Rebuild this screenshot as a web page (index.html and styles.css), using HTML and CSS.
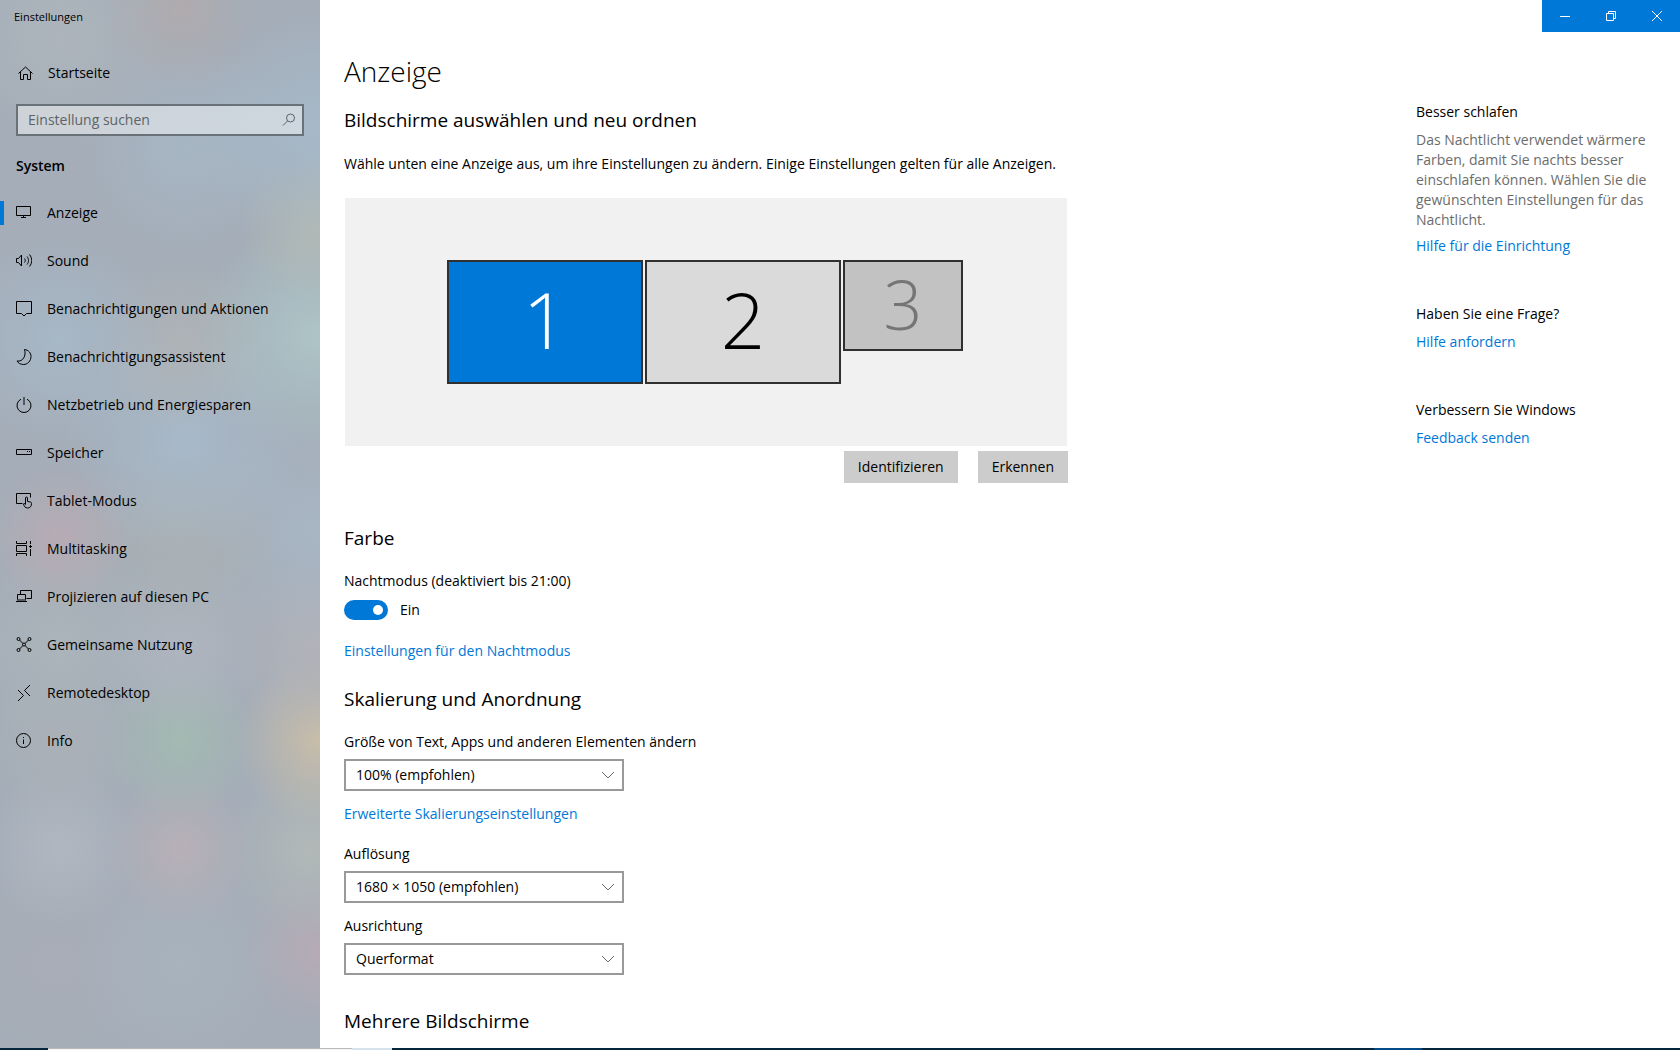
FILE: index.html
```html
<!DOCTYPE html>
<html lang="de">
<head>
    <meta charset="UTF-8">
    <meta name="viewport" content="width=device-width, initial-scale=1.0">
    <title>Einstellungen</title>
    <link rel="stylesheet" href="styles.css">
</head>
<body>
    <div class="window">
        <!-- Sidebar -->
        <aside class="sidebar">
            <div class="window-title">Einstellungen</div>
            <a class="nav-link home-link" href="#start">
                <svg class="icon" viewBox="0 0 16 16"><path d="M1.500 8.500 8.500 2l7 6.500M3.500 7v7.500h3V9.500h4v5h3V7"/></svg>
                Startseite
            </a>
            <div class="search">
                <input type="text" placeholder="Einstellung suchen" aria-label="Einstellung suchen">
                <svg class="icon" viewBox="0 0 16 16"><circle cx="10.500" cy="6" r="4"/><path d="M7.500 9 3 13.500"/></svg>
            </div>
            <h2 class="nav-title">System</h2>
            <nav>
                <a class="nav-link active" href="#anzeige">
                    <svg class="icon" viewBox="0 0 16 16"><path d="M.5 1.500h14v9H.5zM7.500 10.500v2M5 12.500h5"/></svg>
                    Anzeige
                </a>
                <a class="nav-link" href="#sound">
                    <svg class="icon" viewBox="0 0 16 16"><path d="M.5 5.500h2l3-3.500v11l-3-3.500h-2zM8.500 5.500c1 1 1 3 0 4M11 3.500c2 2.500 2 5.500 0 8M13.500 1.500c3 4 3 8 0 12"/></svg>
                    Sound
                </a>
                <a class="nav-link" href="#benachrichtigungen">
                    <svg class="icon" viewBox="0 0 16 16"><path d="M.5.5h15v12h-5L8 15l-2.500-2.500h-5z"/></svg>
                    Benachrichtigungen und Aktionen
                </a>
                <a class="nav-link" href="#assistent">
                    <svg class="icon" viewBox="0 0 16 16"><path d="M8.500.5c4 .5 6.500 3.500 6.500 7 0 4.500-3.500 8-7.500 8-3 0-5.500-1.500-6.500-3.500 6 1 9.500-5.500 7.500-11.500z"/></svg>
                    Benachrichtigungsassistent
                </a>
                <a class="nav-link" href="#energie">
                    <svg class="icon" viewBox="0 0 16 16"><path d="M8 0v8M5 2.200a7 7 0 1 0 6 0"/></svg>
                    Netzbetrieb und Energiesparen
                </a>
                <a class="nav-link" href="#speicher">
                    <svg class="icon" viewBox="0 0 16 16"><path d="M.5 4.500h15v5H.5zM11 6.500h1M13 6.500h1"/></svg>
                    Speicher
                </a>
                <a class="nav-link" href="#tablet">
                    <svg class="icon" viewBox="0 0 16 16"><path d="M6.500 10.500h-6v-10h14v4M9.500 11.500V5c0-1.300 2-1.300 2 0v3.500l3 .5c1 .3 1 1 1 1.500 0 3-1.500 4.500-4 4.500-2 0-3.500-1.500-4-4 .3-1 1.500-.5 2 .5"/></svg>
                    Tablet-Modus
                </a>
                <a class="nav-link" href="#multitasking">
                    <svg class="icon" viewBox="0 0 16 16"><path d="M.5 0v2.500h10V0M.5 15v-2.500h10V15M.5 4.500h10v6H.5zM14.500 0v3M14.500 8v7M13 5.500h3M14.500 4v3"/></svg>
                    Multitasking
                </a>
                <a class="nav-link" href="#projizieren">
                    <svg class="icon" viewBox="0 0 16 16"><path d="M4.500 5.500v-4h11v8h-5M1.500 10.500v-5h8v5M0 12.500h11M1 11h9"/></svg>
                    Projizieren auf diesen PC
                </a>
                <a class="nav-link" href="#nutzung">
                    <svg class="icon" viewBox="0 0 16 16"><circle cx="2.500" cy="2" r="1.500"/><circle cx="13.500" cy="2" r="1.500"/><circle cx="2.500" cy="13" r="1.500"/><circle cx="13.500" cy="13" r="1.500"/><circle cx="8" cy="7.500" r="1.500"/><path d="m3.500 3 3.500 3.500M12.500 3 9 6.500M3.500 12 7 8.500M12.500 12 9 8.500"/></svg>
                    Gemeinsame Nutzung
                </a>
                <a class="nav-link" href="#remote">
                    <svg class="icon" viewBox="0 0 16 16"><path d="m2 5 5.500 5.500L2 16M14 0 8.500 5.500 14 11"/></svg>
                    Remotedesktop
                </a>
                <a class="nav-link" href="#info">
                    <svg class="icon" viewBox="0 0 16 16"><circle cx="7.500" cy="7.500" r="7"/><path d="M7.500 6.500V11M7.500 4v1"/></svg>
                    Info
                </a>
            </nav>
        </aside>

        <div class="content">
            <!-- Window Buttons -->
            <header class="titlebar">
                <button aria-label="Minimieren"><svg viewBox="0 0 10 10"><path d="M0 5.500h10"/></svg></button>
                <button aria-label="Verkleinern"><svg viewBox="0 0 10 10"><path d="M.5 2.500h7v7h-7zM2.500 2.500v-2h7v7h-2"/></svg></button>
                <button aria-label="Schließen"><svg viewBox="0 0 10 10"><path d="m0 0 10 10M10 0 0 10"/></svg></button>
            </header>

            <div class="page">
                <main class="settings">
                    <h1>Anzeige</h1>

                    <section class="arrange">
                        <h2>Bildschirme auswählen und neu ordnen</h2>
                        <p>Wähle unten eine Anzeige aus, um ihre Einstellungen zu ändern. Einige Einstellungen gelten für alle Anzeigen.</p>
                        <div class="stage">
                            <button class="screen selected">1</button>
                            <button class="screen">2</button>
                            <button class="screen small">3</button>
                        </div>
                        <div class="actions">
                            <button>Identifizieren</button>
                            <button>Erkennen</button>
                        </div>
                    </section>

                    <section class="color">
                        <h2>Farbe</h2>
                        <label for="night-mode">Nachtmodus (deaktiviert bis 21:00)</label>
                        <div class="toggle-row">
                            <input type="checkbox" class="toggle" id="night-mode" checked>
                            <span>Ein</span>
                        </div>
                        <a href="#nachtmodus">Einstellungen für den Nachtmodus</a>
                    </section>

                    <section class="scaling">
                        <h2>Skalierung und Anordnung</h2>
                        <label for="scale">Größe von Text, Apps und anderen Elementen ändern</label>
                        <div class="select">
                            <select id="scale"><option>100% (empfohlen)</option></select>
                            <svg viewBox="0 0 12 8"><path d="m0 1 6 6 6-6"/></svg>
                        </div>
                        <a href="#skalierung">Erweiterte Skalierungseinstellungen</a>
                        <label for="resolution">Auflösung</label>
                        <div class="select">
                            <select id="resolution"><option>1680 × 1050 (empfohlen)</option></select>
                            <svg viewBox="0 0 12 8"><path d="m0 1 6 6 6-6"/></svg>
                        </div>
                        <label for="orientation">Ausrichtung</label>
                        <div class="select">
                            <select id="orientation"><option>Querformat</option></select>
                            <svg viewBox="0 0 12 8"><path d="m0 1 6 6 6-6"/></svg>
                        </div>
                    </section>

                    <section>
                        <h2>Mehrere Bildschirme</h2>
                    </section>
                </main>

                <!-- Help Column -->
                <aside class="help">
                    <section>
                        <h3>Besser schlafen</h3>
                        <p>Das Nachtlicht verwendet wärmere Farben, damit Sie nachts besser einschlafen können. Wählen Sie die gewünschten Einstellungen für das Nachtlicht.</p>
                        <a href="#einrichtung">Hilfe für die Einrichtung</a>
                    </section>
                    <section>
                        <h3>Haben Sie eine Frage?</h3>
                        <a href="#hilfe">Hilfe anfordern</a>
                    </section>
                    <section>
                        <h3>Verbessern Sie Windows</h3>
                        <a href="#feedback">Feedback senden</a>
                    </section>
                </aside>
            </div>
        </div>
    </div>

    <!-- Taskbar edge -->
    <footer class="taskbar">
        <div class="task-search"></div>
        <div class="task-view"></div>
        <div class="task-active"></div>
    </footer>
</body>
</html>
```
FILE: styles.css
```css
* {
    box-sizing: border-box;
}
body {
    display: flex;
    flex-direction: column;
    height: 100vh;
    margin: 0;
    overflow: hidden;
    background-color: #fff;
    color: #000;
    font-family: "Open Sans", "Noto Sans", sans-serif;
    font-size: 14px;
    line-height: 20px;
}
h1, h2, h3, p {
    margin: 0;
    font-weight: 400;
}
a {
    color: #0078d7;
    text-decoration: none;
}
button, input, select {
    margin: 0;
    font: inherit;
    color: inherit;
}
svg {
    fill: none;
    stroke: currentColor;
    flex-shrink: 0;
}
.window {
    display: flex;
    flex: 1;
    min-height: 0;
}

/* Sidebar */
.sidebar {
    width: 320px;
    flex-shrink: 0;
    overflow: hidden;
    background-color: #a4adb8;
    background-image:
        radial-gradient(circle 75px at 180px 10px, rgba(184, 170, 168, 0.6), transparent),
        radial-gradient(circle 110px at 60px 40px, rgba(177, 184, 189, 0.7), transparent),
        radial-gradient(circle 120px at 315px 128px, rgba(167, 190, 208, 0.7), transparent),
        radial-gradient(circle 110px at 185px 148px, rgba(169, 188, 203, 0.6), transparent),
        radial-gradient(circle 75px at 315px 225px, rgba(180, 187, 178, 0.8), transparent),
        radial-gradient(circle 120px at 315px 336px, rgba(175, 202, 202, 0.8), transparent),
        radial-gradient(circle 110px at 60px 340px, rgba(168, 188, 204, 0.7), transparent),
        radial-gradient(circle 90px at 180px 345px, rgba(176, 180, 181, 0.8), transparent),
        radial-gradient(circle 120px at 185px 438px, rgba(169, 190, 208, 0.7), transparent),
        radial-gradient(circle 75px at 60px 538px, rgba(188, 171, 179, 0.8), transparent),
        radial-gradient(circle 100px at 180px 545px, rgba(172, 178, 178, 0.7), transparent),
        radial-gradient(circle 120px at 315px 530px, rgba(170, 185, 200, 0.7), transparent),
        radial-gradient(circle 100px at 60px 645px, rgba(172, 182, 186, 0.8), transparent),
        radial-gradient(circle 90px at 180px 645px, rgba(176, 182, 192, 0.9), transparent),
        radial-gradient(circle 90px at 315px 645px, rgba(182, 180, 185, 0.8), transparent),
        radial-gradient(circle 78px at 180px 740px, rgba(163, 187, 176, 0.9), transparent),
        radial-gradient(circle 85px at 320px 740px, rgba(204, 191, 167, 0.9), transparent),
        radial-gradient(circle 80px at 60px 745px, rgba(174, 179, 182, 0.6), transparent),
        radial-gradient(circle 80px at 60px 848px, rgba(178, 184, 194, 0.9), transparent),
        radial-gradient(circle 75px at 180px 850px, rgba(186, 176, 183, 0.9), transparent),
        radial-gradient(circle 85px at 310px 850px, rgba(179, 186, 183, 0.9), transparent),
        radial-gradient(circle 80px at 320px 950px, rgba(186, 170, 181, 0.8), transparent),
        radial-gradient(circle 110px at 180px 965px, rgba(169, 180, 191, 0.8), transparent),
        radial-gradient(circle 110px at 55px 965px, rgba(169, 173, 183, 0.9), transparent);
}
.window-title {
    height: 32px;
    padding: 7px 14px;
    font-size: 11px;
}
.nav-link {
    display: flex;
    align-items: center;
    gap: 15px;
    height: 48px;
    padding: 0 16px;
    color: #000;
    white-space: nowrap;
}
.icon {
    width: 16px;
    height: 16px;
}
.home-link {
    margin-top: 17px;
    padding-left: 17px;
}
.search {
    display: flex;
    align-items: center;
    height: 32px;
    margin: 7px 16px 0;
    padding-right: 6px;
    border: 2px solid #697279;
    background-color: rgba(255, 255, 255, 0.45);
    color: #5c6369;
}
.search input {
    flex: 1;
    min-width: 0;
    padding: 0 10px;
    border: 0;
    outline: 0;
    background: none;
}
.search input::placeholder {
    color: #5c6369;
}
.nav-title {
    margin: 20px 16px 13px;
    font-weight: 600;
    font-size: 14px;
}
.nav-link.active {
    background: linear-gradient(#0078d7, #0078d7) left center / 4px 24px no-repeat;
}

/* Content */
.content {
    display: flex;
    flex: 1;
    flex-direction: column;
    min-width: 0;
}
.titlebar {
    display: flex;
    justify-content: flex-end;
    height: 32px;
    flex-shrink: 0;
}
.titlebar button {
    display: flex;
    align-items: center;
    justify-content: center;
    width: 46px;
    padding: 0;
    border: 0;
    background-color: #0078d7;
    color: #fff;
}
.titlebar svg {
    width: 10px;
    height: 10px;
}
.page {
    display: flex;
    justify-content: space-between;
    gap: 24px;
    flex: 1;
    min-height: 0;
    padding: 21px 24px 0;
    overflow: hidden;
}
.settings {
    flex: 0 1 724px;
}
.settings h1 {
    font-size: 28px;
    font-weight: 300;
    line-height: 36px;
}
.settings h2 {
    font-size: 19px;
    line-height: 24px;
}
.settings label, .settings section > a {
    display: block;
}

/* Displays */
.arrange {
    margin-top: 19px;
}
.arrange p {
    margin-top: 22px;
}
.stage {
    display: flex;
    align-items: flex-start;
    gap: 2px;
    height: 248px;
    margin: 24px 1px 0;
    padding: 62px 0 0 102px;
    background-color: #f1f1f1;
}
.screen {
    flex-shrink: 0;
    width: 196px;
    height: 124px;
    padding: 0 0 6px;
    border: 2px solid #303030;
    background-color: #dadada;
    font-size: 78px;
    font-weight: 300;
    line-height: 112px;
}
.screen.selected {
    background-color: #0078d7;
    color: #fff;
}
.screen.small {
    width: 120px;
    height: 91px;
    padding-bottom: 4px;
    background-color: #c2c2c2;
    color: #757575;
    font-size: 68px;
    line-height: 83px;
}
.actions {
    display: flex;
    justify-content: flex-end;
    gap: 20px;
    margin-top: 5px;
}
.actions button {
    height: 32px;
    padding: 0 14px;
    border: 0;
    background-color: #ccc;
}

/* Color */
.color {
    margin-top: 43px;
}
.color label {
    margin-top: 21px;
}
.toggle-row {
    display: flex;
    align-items: center;
    gap: 12px;
    margin: 9px 0 21px;
}
.toggle {
    appearance: none;
    width: 44px;
    height: 20px;
    border-radius: 10px;
    background-color: #0078d7;
}
.toggle::before {
    content: "";
    display: block;
    width: 10px;
    height: 10px;
    margin: 5px 0 0 29px;
    border-radius: 50%;
    background-color: #fff;
}

/* Scaling */
.scaling {
    margin: 26px 0 34px;
}
.scaling h2 {
    margin-bottom: 21px;
}
.select {
    position: relative;
    width: 280px;
    margin: 7px 0 13px;
}
.select select {
    display: block;
    width: 100%;
    height: 32px;
    padding: 0 10px;
    border: 2px solid #999;
    border-radius: 0;
    appearance: none;
    background-color: #fff;
}
.select svg {
    position: absolute;
    top: 12px;
    right: 10px;
    width: 12px;
    height: 8px;
    color: #666;
    pointer-events: none;
}
.settings .scaling > a {
    margin-bottom: 20px;
}

/* Help */
.help {
    width: 240px;
    flex-shrink: 0;
    padding-top: 49px;
}
.help section {
    margin-bottom: 48px;
}
.help h3 {
    margin-bottom: 8px;
    font-size: 14px;
}
.help p {
    margin-bottom: 6px;
    color: #6c6c6c;
}

/* Taskbar edge */
.taskbar {
    display: flex;
    height: 2px;
    padding-left: 48px;
    background-color: #06263d;
}
.task-search {
    width: 304px;
    border-top: 1px solid #b8b8b8;
    background-color: #f4f4f4;
}
.task-view {
    width: 40px;
    background-color: #d5e2ec;
}
.task-active {
    width: 48px;
    margin-left: auto;
    margin-right: 258px;
    background-color: #004a87;
}
```
